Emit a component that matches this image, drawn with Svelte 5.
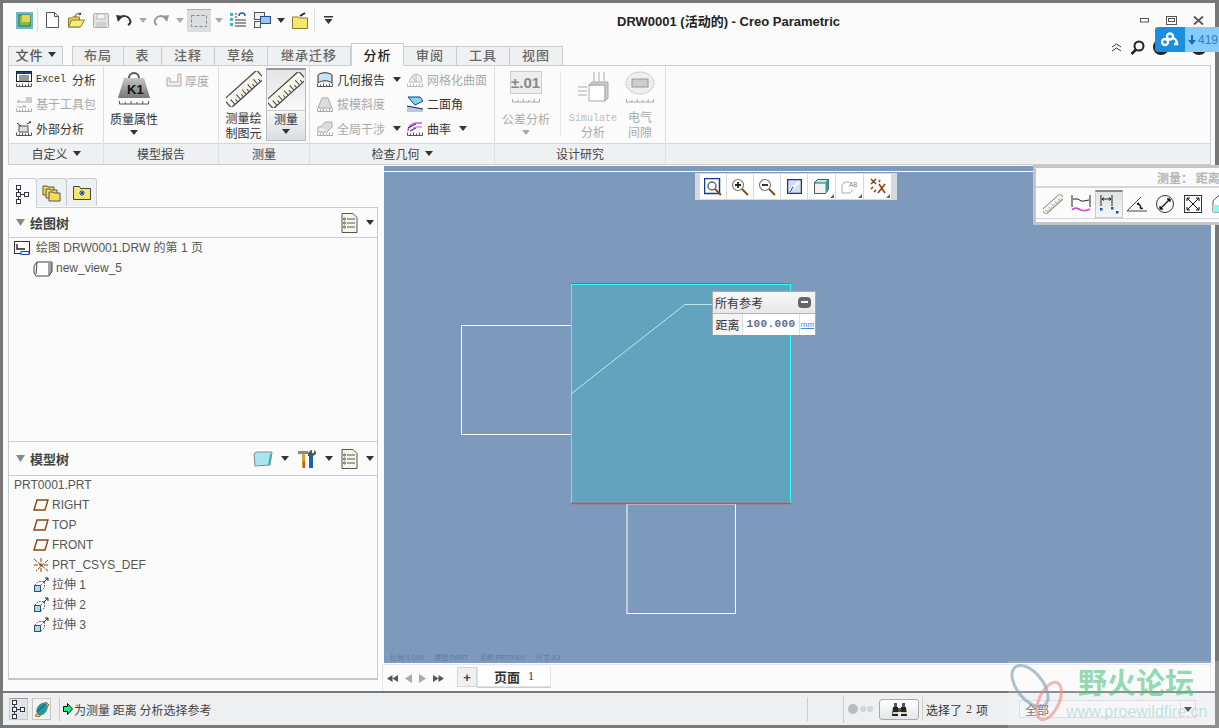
<script>
  const tabs = [['布局','t52'],['表','t38'],['注释','t53'],['草绘','t53'],['继承迁移','t83'],['分析','t53 on'],['审阅','t53'],['工具','t53'],['视图','t53']];
  const planes = ['RIGHT','TOP','FRONT'];
  const extrudes = ['拉伸 1','拉伸 2','拉伸 3'];
  const ticks = [0,1,2,3,4,5,6,7,8,9];
</script>

{#snippet caret(dim = false)}
  <svg class="caret" width="8" height="5" viewBox="0 0 8 5"><path d="M0 0h8L4 5z" fill={dim ? '#aaa' : '#333'}/></svg>
{/snippet}

{#snippet scale(x, y, w, color = '#555')}
  <path d="M{x} {y}h{w}M{x} {y}v-3M{x + w * .2} {y}v-2M{x + w * .4} {y}v-3M{x + w * .6} {y}v-2M{x + w * .8} {y}v-3M{x + w} {y}v-3" stroke={color} fill="none"/>
{/snippet}

{#snippet ruler(size)}
  <svg width={size} height={size} viewBox="0 0 36 36">
    <g transform="rotate(-42 18 18)">
      <rect x="-4" y="12.500" width="44" height="11" rx="1.500" fill="#f7f6ec" stroke="#444" stroke-width="1.200"/>
      {#each ticks as t}
        <path d="M{1 + t * 3.8} 23v{t % 2 ? -3 : -6}" stroke="#444"/>
      {/each}
    </g>
  </svg>
{/snippet}

{#snippet listIcon()}
  <svg width="17" height="20" viewBox="0 0 17 20"><path d="M1 .5h11l4 4v15H1z" fill="#f5f5ea" stroke="#555"/><path d="M6 6h8M6 10h8M6 14h8" stroke="#555"/><circle cx="3.500" cy="6" r="1" fill="none" stroke="#555"/><circle cx="3.500" cy="10" r="1" fill="none" stroke="#555"/><circle cx="3.500" cy="14" r="1" fill="none" stroke="#555"/></svg>
{/snippet}

{#snippet treeIcon()}
  <svg width="15" height="20" viewBox="0 0 15 20"><g fill="#fff" stroke="#334"><rect x="1.500" y="1.500" width="4" height="4"/><rect x="1.500" y="8.500" width="4" height="4"/><rect x="9.500" y="8.500" width="4" height="4"/><rect x="1.500" y="15.500" width="4" height="4"/></g><path d="M3.500 5.500v3M3.500 12.500v3M5.500 10.500h4" stroke="#334"/></svg>
{/snippet}

<div class="root">
  <div class="win">
    <header class="titlebar">
      <div class="qat">
        <svg class="m0" width="17" height="17" viewBox="0 0 17 17"><rect width="17" height="17" fill="#6fb7cf"/><rect x="3" y="3" width="11" height="11" fill="#7cc04e" stroke="#3b6e2a"/><rect x="6" y="3" width="8" height="7" fill="#e9d44e"/></svg>
        <i class="sep s1"></i>
        <svg class="m8" width="13" height="16" viewBox="0 0 13 16"><path d="M.5.5h8l4 4v11H.5z" fill="#fff" stroke="#555"/><path d="M8.500.5v4h4" fill="none" stroke="#555"/></svg>
        <svg class="m9" width="17" height="16" viewBox="0 0 17 16"><path d="M.5 15V6h3l1-1h7v10z" fill="#f2d54e" stroke="#8b7a20"/><path d="M.5 15l3-7h13l-4 7z" fill="#f9e88a" stroke="#8b7a20"/><path d="M7 5c0-3 3-4 6-3l-1-1.500M13 2l-2 1" fill="none" stroke="#333"/></svg>
        <svg class="m8" width="16" height="15" viewBox="0 0 16 15"><rect x=".5" y=".5" width="15" height="14" rx="1" fill="#e4e4e4" stroke="#aaa"/><rect x="4" y="1" width="8" height="5" fill="#f6f6f6" stroke="#bbb"/><rect x="3" y="9" width="10" height="5" fill="#cfcfcf"/></svg>
        <svg class="m7" width="16" height="12" viewBox="0 0 16 12"><path d="M3 5c3-4 9-4 11 1 1 2 0 4-2 5" fill="none" stroke="#333" stroke-width="2"/><path d="M0 1l7 1-5 6z" fill="#333"/></svg>
        <span class="m7 cw">{@render caret(true)}</span>
        <svg class="m6" width="16" height="12" viewBox="0 0 16 12"><path d="M13 5C10 1 4 1 2 6c-1 2 0 4 2 5" fill="none" stroke="#999" stroke-width="2"/><path d="M16 1l-7 1 5 6z" fill="#999"/></svg>
        <span class="m7 cw">{@render caret(true)}</span>
        <span class="pressed"><svg width="16" height="12" viewBox="0 0 16 12"><rect x=".5" y=".5" width="15" height="11" fill="none" stroke="#888" stroke-dasharray="3 2"/></svg></span>
        <span class="m4 cw">{@render caret(true)}</span>
        <svg class="m7" width="16" height="16" viewBox="0 0 16 16"><path d="M5 2h2M5 5h2M5 8h11M5 11h11M5 14h11" stroke="#334"/><g fill="#3fb6c8"><rect x="0" y="1" width="3" height="3"/><rect x="0" y="6" width="3" height="3"/><rect x="0" y="11" width="3" height="3"/></g><path d="M9 4a3 3 0 0 1 6 0" fill="none" stroke="#1a5fb4" stroke-width="1.500"/></svg>
        <svg class="m8" width="17" height="16" viewBox="0 0 17 16"><rect x=".5" y=".5" width="10" height="7" fill="#eee" stroke="#555"/><rect x="6.500" y="4.500" width="10" height="7" fill="#9cc3ea" stroke="#1a4fa0"/><rect x=".5" y="9.500" width="6" height="6" fill="#eee" stroke="#555"/></svg>
        <span class="m6 cw">{@render caret()}</span>
        <svg class="m7" width="16" height="17" viewBox="0 0 16 17"><path d="M.5 5h6l1 1h8v10.500h-15z" fill="#f5e96b" stroke="#8b7a20"/><path d="M8 4l5-3" stroke="#222" stroke-width="2"/></svg>
        <i class="sep s2"></i>
        <svg class="m9" width="9" height="8" viewBox="0 0 9 8"><path d="M0 0h9v1.500H0zM.5 3h8L4.500 8z" fill="#333"/></svg>
      </div>
      <h1 class="title">DRW0001 (活动的) - Creo Parametric</h1>
      <div class="winctl">
        <svg width="10" height="5" viewBox="0 0 10 5"><rect x=".5" y=".5" width="8" height="3.500" fill="none" stroke="#555"/></svg>
        <svg width="11" height="9" viewBox="0 0 11 9"><rect x=".5" y=".5" width="10" height="8" fill="none" stroke="#555"/><rect x="2.500" y="2.500" width="6" height="3" fill="none" stroke="#555"/></svg>
        <svg width="11" height="9" viewBox="0 0 11 9"><path d="M1 .5l9 8M10 .5l-9 8" stroke="#555" stroke-width="1.800"/></svg>
      </div>
    </header>

    <div class="tabrow">
      <div class="filetab">文件 {@render caret(false)}</div>
      <div class="tabs">
        {#each tabs as [t, c]}
          <div class="tab {c}">{t}</div>
        {/each}
      </div>
      <div class="helpers">
        <svg width="11" height="9" viewBox="0 0 11 9"><path d="M1 4l4.500-3L10 4M1 8l4.500-3L10 8" fill="none" stroke="#333"/></svg>
        <svg width="15" height="15" viewBox="0 0 15 15"><circle cx="9" cy="6" r="4.500" fill="none" stroke="#222" stroke-width="2"/><path d="M6 9.500L1.500 14" stroke="#222" stroke-width="2.500"/></svg>
        <svg width="16" height="16" viewBox="0 0 16 16"><circle cx="8" cy="8" r="8" fill="#222"/></svg>
        <svg class="disc2" width="16" height="16" viewBox="0 0 16 16"><circle cx="8" cy="8" r="8" fill="#222"/></svg>
      </div>
    </div>

    <section class="ribbon">
      <div class="group g1">
        <div class="gbody col3">
          <div class="item"><svg width="16" height="16" viewBox="0 0 16 16"><rect x=".5" y=".5" width="15" height="10" fill="#fff" stroke="#222"/><rect x="1" y="1" width="14" height="2" fill="#1a3f8c"/><path d="M3 5h10M3 7h10M3 9h10" stroke="#333"/>{@render scale(.5, 15.5, 15)}</svg><span class="excel">Excel</span><span class="m2">分析</span></div>
          <div class="item dim"><svg width="16" height="16" viewBox="0 0 16 16"><path d="M1 6h9M1 6l3-2M1 11h9M10 11l-3-2" stroke="#aaa" fill="none"/><rect x="10" y="1" width="6" height="6" fill="#ccc"/>{@render scale(.5, 15.5, 15, '#aaa')}</svg><span>基于工具包</span></div>
          <div class="item"><svg width="16" height="16" viewBox="0 0 16 16"><rect x="3" y="6" width="9" height="6" fill="#ddd" stroke="#555"/><path d="M1 3l4 3M11 4l4-2M15 2l-2 0" stroke="#222" fill="none"/>{@render scale(.5, 15.5, 15)}</svg><span>外部分析</span></div>
        </div>
        <div class="glabel">自定义 {@render caret()}</div>
      </div>

      <div class="group g2">
        <div class="gbody row">
          <div class="big w60">
            <svg width="32" height="34" viewBox="0 0 32 34"><defs><linearGradient id="kg" x1="0" y1="0" x2="0" y2="1"><stop offset="0" stop-color="#c4c4c4"/><stop offset="1" stop-color="#777"/></linearGradient></defs><path d="M11 7a5 5 0 0 1 10 0" fill="none" stroke="#555" stroke-width="2"/><path d="M6 7h20l6 20H0z" fill="url(#kg)"/><text x="9" y="23" class="k1">K1</text>{@render scale(1.500, 33, 29)}</svg>
            <div class="biglabel pad14">质量属性</div>
            {@render caret()}
          </div>
          <div class="item dim solo"><svg width="16" height="14" viewBox="0 0 16 14"><path d="M1 5h3v4h8V1h3v12H1z" fill="#eee" stroke="#aaa"/></svg><span>厚度</span></div>
        </div>
        <div class="glabel">模型报告</div>
      </div>

      <div class="group g3">
        <div class="gbody row">
          <div class="big w45">
            {@render ruler(36)}
            <div class="biglabel two"><div>测量绘</div><div>制图元</div></div>
          </div>
          <div class="active">
            <div class="atop">{@render ruler(36)}</div>
            <div class="abot"><span>测量</span>{@render caret()}</div>
          </div>
        </div>
        <div class="glabel">测量</div>
      </div>

      <div class="group g4">
        <div class="gbody row">
          <div class="col3 c83">
            <div class="item"><svg width="16" height="16" viewBox="0 0 16 16"><path d="M1 12V4c3-3 11-3 14 0v8c-4-3-10-3-14 0z" fill="#c9e0f7" stroke="#333"/>{@render scale(.5, 15.5, 15)}</svg><span>几何报告</span>{@render caret()}</div>
            <div class="item dim"><svg width="16" height="16" viewBox="0 0 16 16"><path d="M1 12l4-10h6l4 10z" fill="#ddd" stroke="#aaa"/>{@render scale(.5, 15.5, 15, '#aaa')}</svg><span>拔模斜度</span></div>
            <div class="item dim"><svg width="16" height="16" viewBox="0 0 16 16"><rect x="1" y="7" width="9" height="5" fill="#eee" stroke="#aaa"/><path d="M4 7l4-5h7v5l-5 5" fill="#ddd" stroke="#aaa"/>{@render scale(.5, 15.5, 15, '#aaa')}</svg><span>全局干涉</span>{@render caret()}</div>
          </div>
          <div class="col3 c85">
            <div class="item dim"><svg width="16" height="16" viewBox="0 0 16 16"><path d="M2 11l3-6 4-2 5 2 1 6zM5 5l4 6M9 3v8" fill="#eee" stroke="#bbb"/>{@render scale(.5, 15.5, 15, '#bbb')}</svg><span>网格化曲面</span></div>
            <div class="item"><svg width="16" height="16" viewBox="0 0 16 16"><path d="M1 1h12l3 4-8 4z" fill="#7fd7ea" stroke="#123a8c"/><path d="M0 10l16 3v3H0z" fill="#b8c9e0"/><path d="M0 10l16 3" stroke="#222"/></svg><span>二面角</span></div>
            <div class="item"><svg width="16" height="16" viewBox="0 0 16 16"><path d="M1 11c0-5 5-8 9-8h5" fill="none" stroke="#d14fd1" stroke-width="1.500"/><path d="M5 11c0-3 3-4 5-4h5" fill="none" stroke="#d14fd1"/><path d="M1 8l8-4M3 11l6-3" stroke="#123a8c"/>{@render scale(.5, 15.5, 15)}</svg><span>曲率</span>{@render caret()}</div>
          </div>
        </div>
        <div class="glabel">检查几何 {@render caret()}</div>
      </div>

      <div class="group g5">
        <div class="gbody row">
          <div class="big w60b dimtext">
            <svg width="32" height="34" viewBox="0 0 32 34"><rect x=".5" y=".5" width="31" height="22" fill="#eee" stroke="#ccc"/><text x="1" y="17" class="tol">±.01</text>{@render scale(2.500, 31, 27, '#aaa')}</svg>
            <div class="biglabel pad14">公差分析</div>
            {@render caret(true)}
          </div>
          <i class="vsep"></i>
          <div class="big w64 dimtext">
            <svg width="32" height="34" viewBox="0 0 32 34"><path d="M17 1v9M22 1v9M27 1v9M1 16h9M1 20h9M1 24h9" stroke="#aaa"/><rect x="12" y="14" width="16" height="16" fill="#fff" stroke="#aaa"/><path d="M12 14l3-3h16v16l-3 3V14z" fill="#ccc" stroke="#aaa"/></svg>
            <div class="biglabel two"><div class="mono">Simulate</div><div>分析</div></div>
          </div>
          <div class="big w30 dimtext">
            <svg width="32" height="34" viewBox="0 0 32 34"><ellipse cx="16" cy="12" rx="14" ry="11" fill="#eee" stroke="#bbb" stroke-dasharray="2 1"/><rect x="8" y="8" width="16" height="8" fill="#ccc" stroke="#999"/>{@render scale(2.500, 31, 27, '#aaa')}</svg>
            <div class="biglabel two"><div>电气</div><div>间隙</div></div>
          </div>
        </div>
        <div class="glabel">设计研究</div>
      </div>
      <div class="group g6">
        <div class="gbody"></div>
        <div class="glabel"></div>
      </div>
    </section>

    <main class="main">
      <aside class="left">
        <div class="navtabs">
          <div class="navtab act">{@render treeIcon()}</div>
          <div class="navtab"><svg width="19" height="19" viewBox="0 0 19 19"><g fill="#f2dc55" stroke="#555"><path d="M1 3h4l1 1h6v8H1z"/><path d="M4 6h4l1 1h6v8H4z"/><path d="M7 9h4l1 1h6v8H7z"/></g></svg></div>
          <div class="navtab"><svg width="18" height="15" viewBox="0 0 18 15"><path d="M.5 14.500V1.500h6l1 2h10v11z" fill="#f5e96b" stroke="#444"/><path d="M9 5v6M6 8h6M7 6l4 4M11 6l-4 4" stroke="#1a3fc0"/></svg></div>
        </div>
        <div class="panel">
          <div class="phead">
            <svg width="9" height="7" viewBox="0 0 9 7"><path d="M0 0h9L4.500 7z" fill="#888"/></svg>
            <b>绘图树</b>
            <span class="ptools">{@render listIcon()}{@render caret()}</span>
          </div>
          <div class="tree top">
            <div class="node"><svg width="16" height="14" viewBox="0 0 16 14"><rect x=".5" y=".5" width="15" height="12" fill="#fff" stroke="#333"/><path d="M3 3v5h8" fill="none" stroke="#222" stroke-width="1.400"/><rect x="7" y="10.500" width="8" height="3" fill="#fff" stroke="#1a3fc0"/></svg><span>绘图 DRW0001.DRW 的第 1 页</span></div>
            <div class="node in"><svg width="20" height="17" viewBox="0 0 20 17"><path d="M1 13V6l3-4h15v9l-3 5H3z" fill="#fff" stroke="#444"/><path d="M4 2l-1 12M16 3v12M18 3v10" stroke="#444" fill="none"/></svg><span>new_view_5</span></div>
          </div>
          <div class="phead second">
            <svg width="9" height="7" viewBox="0 0 9 7"><path d="M0 0h9L4.500 7z" fill="#888"/></svg>
            <b>模型树</b>
            <span class="ptools">
              <svg width="20" height="16" viewBox="0 0 20 16"><path d="M3 1h16l-2 13-15 1-1-12z" fill="#a8e6ef" stroke="#888"/><path d="M17 3h2l-2 11h-2z" fill="#3fb0b8"/></svg>
              {@render caret()}
              <svg width="20" height="20" viewBox="0 0 20 20"><path d="M1 2h10v3H1z" fill="#888"/><path d="M5 5h3v14H5z" fill="#e8a020"/><path d="M6 12h2v7H6z" fill="#d94f1f"/><path d="M12 7h4v12h-4z" fill="#1a5fb4"/><path d="M11 7V4l3-3h1v3h2V1l2 2v2l-3 2z" fill="#555"/></svg>
              {@render caret()}
              {@render listIcon()}
              {@render caret()}
            </span>
          </div>
          <div class="tree bottom">
            <div class="node root0"><span>PRT0001.PRT</span></div>
            {#each planes as p}
              <div class="node in"><svg width="16" height="12" viewBox="0 0 16 12"><path d="M4 1h11l-3 10H1z" fill="none" stroke="#8b4513" stroke-width="1.400"/></svg><span>{p}</span></div>
            {/each}
            <div class="node in"><svg width="16" height="16" viewBox="0 0 16 16"><path d="M1 2l14 12M15 3L3 14M8 1v14M1 8h14" stroke="#8b4513" fill="none" stroke-dasharray="4 1"/></svg><span>PRT_CSYS_DEF</span></div>
            {#each extrudes as e}
              <div class="node in"><svg width="16" height="16" viewBox="0 0 16 16"><rect x="1.500" y="8.500" width="6" height="6" fill="#8fe8ea" stroke="#446"/><path d="M1.500 8.500l4-4h6v6l-4 4M7.500 8.500l4-4" fill="none" stroke="#666" stroke-dasharray="2 1"/><path d="M11 5l4-4M12 1h3v3" fill="none" stroke="#222"/></svg><span>{e}</span></div>
            {/each}
          </div>
        </div>
      </aside>

      <div class="viewcol">
        <div class="canvas">
          <i class="wline"></i>
          <div class="viewbar">
            <span class="vb"><svg width="18" height="18" viewBox="0 0 18 18"><rect x=".5" y=".5" width="15" height="15" fill="#fff" stroke="#123a8c" stroke-width="1.500"/><circle cx="8" cy="8" r="4" fill="none" stroke="#666" stroke-width="1.500"/><path d="M11 11l6 6" stroke="#8b4513" stroke-width="1.800"/></svg></span>
            <span class="vb"><svg width="18" height="18" viewBox="0 0 18 18"><circle cx="7" cy="7" r="5.500" fill="#fff" stroke="#777" stroke-width="1.200"/><path d="M4 7h6M7 4v6" stroke="#222" stroke-width="1.800"/><path d="M11 11l6 6" stroke="#8b4513" stroke-width="1.800"/></svg></span>
            <span class="vb"><svg width="18" height="18" viewBox="0 0 18 18"><circle cx="7" cy="7" r="5.500" fill="#fff" stroke="#777" stroke-width="1.200"/><path d="M4 7h6" stroke="#222" stroke-width="1.800"/><path d="M11 11l6 6" stroke="#8b4513" stroke-width="1.800"/></svg></span>
            <span class="vb"><svg width="15" height="15" viewBox="0 0 15 15"><rect x=".5" y=".5" width="14" height="14" fill="#cfe0f2" stroke="#123a8c" stroke-width="1.500"/><path d="M3 12L12 3" stroke="#fff" stroke-width="3" stroke-dasharray="2 1"/><path d="M3 13l3-5" stroke="#123a8c"/></svg></span>
            <span class="vb wide"><svg width="15" height="15" viewBox="0 0 15 15"><path d="M.5 4l3-3.500h11v10l-3 4h-11z" fill="#f2f2f2" stroke="#555"/><path d="M.5 4h11l3-3.500h-11z" fill="#a8f0ef" stroke="#555"/><path d="M11.500 4v10.500l3-4V.5z" fill="#2f9c9c"/></svg></span>
            <span class="vb wide"><svg width="17" height="14" viewBox="0 0 17 14"><path d="M1 5l3-3h5M1 5v8h8l3-3" fill="none" stroke="#aaa"/><text x="8" y="7" class="ab">AB</text></svg></span>
            <span class="vb wide"><svg width="16" height="17" viewBox="0 0 16 17"><path d="M1 1l5 5M6 1L1 6M9 6l6 9M15 6L8 15M10 2l-1 2M1 11l2-2M4 14l2-2" stroke="#8b4513" stroke-width="1.600"/></svg></span>
          </div>

          <svg class="drawing" width="827" height="497" viewBox="384 166 827 497">
            <rect x="461.500" y="325.500" width="110" height="109" fill="none" stroke="#fff"/>
            <rect x="627" y="504" width="108.500" height="109.500" fill="none" stroke="#fff"/>
            <rect x="571" y="284" width="219" height="220" fill="#64a3bd"/>
            <path d="M571 284.500h219.500M571.500 284v220M790.500 284v220" stroke="#30ffff" fill="none"/>
            <path d="M571 283.500h220" stroke="#f0404a"/>
            <path d="M571 503.500h220" stroke="#f0404a" stroke-width="1.500"/>
            <path d="M571 394L685 304.500h28" fill="none" stroke="#bfe9ee"/>
          </svg>

          <div class="measure">
            <div class="mhead"><span>所有参考</span><i class="minus"></i></div>
            <div class="mrow"><span class="ml">距离</span><span class="mv">100.000</span><span class="mu">mm</span></div>
          </div>

          <div class="sheetinfo"><span>比例:1.000</span><span>类型:PART</span><span>名称:PRT0001</span><span>尺寸:A3</span></div>
        </div>
        <div class="pagebar">
          <div class="pnav">
            <svg width="11" height="7" viewBox="0 0 11 7"><path d="M5.500 0v7L0 3.500zM11 0v7L5.500 3.500z" fill="#555"/></svg>
            <svg width="7" height="9" viewBox="0 0 7 9"><path d="M7 0v9L0 4.500z" fill="#aaa"/></svg>
            <svg width="7" height="9" viewBox="0 0 7 9"><path d="M0 0v9l7-4.500z" fill="#aaa"/></svg>
            <svg width="11" height="7" viewBox="0 0 11 7"><path d="M0 0v7l5.500-3.500zM5.500 0v7L11 3.500z" fill="#555"/></svg>
          </div>
          <div class="plus">+</div>
          <div class="ptab"><b>页面</b><span>1</span></div>
        </div>
      </div>
    </main>

    <footer class="status">
      <span class="sbtn sel">{@render treeIcon()}</span>
      <span class="sbtn"><svg width="16" height="17" viewBox="0 0 16 17"><path d="M1 15L12 1l3 3L5 16z" fill="#f2d020" stroke="#c96a12"/><ellipse cx="8" cy="8" rx="5" ry="7" transform="rotate(35 8 8)" fill="#2b9a8a"/><path d="M3 11l8-8" stroke="#1a5fb4" stroke-width="1.500"/></svg></span>
      <i class="ssep first"></i>
      <svg width="10" height="12" viewBox="0 0 10 12"><path d="M.5 3.500h4V.5L9.500 6l-5 5.500v-3h-4z" fill="#1df08a" stroke="#111"/></svg>
      <span class="msg">为测量 距离 分析选择参考</span>
      <span class="spacer"></span>
      <i class="ssep"></i>
      <i class="ssep two"></i>
      <span class="dots"><i class="d1"></i><i class="d2"></i><i class="d2"></i></span>
      <span class="bino"><svg width="17" height="15" viewBox="0 0 17 15"><path d="M1 14l1-9h5v9zM10 14V5h5l1 9z" fill="#222"/><path d="M3 5V1h3v4M11 5V1h3v4M7 6h3v4H7z" fill="#555"/><path d="M2 11h5M10 11h6" stroke="#d8d4b8" stroke-width="2"/></svg></span>
      <i class="ssep three"></i>
      <span class="picked">选择了 <em>2</em> 项</span>
      <div class="filter"><span>全部</span><i class="fbtn">{@render caret()}</i></div>
    </footer>
  </div>

  <div class="floatwin">
    <div class="ftitle"><span>测量： 距离</span></div>
    <div class="fbar">
      <span class="fi">{@render ruler(20)}</span>
      <span class="fi"><svg width="20" height="20" viewBox="0 0 20 20"><path d="M1 1v12M19 1v12M2 5l5 0 3 2 3 0 5-1" fill="none" stroke="#222"/><path d="M1 16c3-4 6-1 9 0s6 1 9-1" fill="none" stroke="#d14fd1" stroke-width="1.800"/></svg></span>
      <span class="fi on"><svg width="20" height="20" viewBox="0 0 20 20"><path d="M2 1v11M13 1v11M3 5h9M3 5l2-1.500M3 5l2 1.500M12 5l-2-1.500M12 5l-2 1.500" fill="none" stroke="#222"/><rect x="1" y="14" width="2.500" height="2.500" fill="#1a4fc0"/><rect x="12" y="13" width="2.500" height="2.500" fill="#1a4fc0"/><rect x="17" y="17" width="2.500" height="2.500" fill="#1a4fc0"/></svg></span>
      <span class="fi"><svg width="20" height="20" viewBox="0 0 20 20"><path d="M0 17h20M0 17L14 3" fill="none" stroke="#444"/><path d="M10 10c3 0 4 2 4 5M10 10l2-1M14 15l-1-2M14 15l2-1" fill="none" stroke="#111" stroke-width="1.300"/></svg></span>
      <span class="fi"><svg width="20" height="20" viewBox="0 0 20 20"><circle cx="10" cy="10" r="8.500" fill="none" stroke="#333"/><path d="M5 15L15 5M5 15v-3M5 15h3M15 5v3M15 5h-3" fill="none" stroke="#111" stroke-width="1.300"/></svg></span>
      <span class="fi"><svg width="18" height="18" viewBox="0 0 18 18"><rect x=".5" y=".5" width="17" height="17" fill="none" stroke="#333"/><path d="M3 3l12 12M15 3L3 15M3 3h3M3 3v3M15 3h-3M15 3v3M3 15h3M3 15v-3M15 15h-3M15 15v-3" fill="none" stroke="#111"/></svg></span>
      <span class="fi"><svg width="18" height="18" viewBox="0 0 18 18"><path d="M1 6l5-5h12v16H1z" fill="#fff" stroke="#555"/><rect x="1" y="10" width="17" height="7" fill="#8ff5f0"/></svg></span>
    </div>
  </div>

  <div class="badge">
    <span class="bl"><svg width="18" height="15" viewBox="0 0 18 15"><circle cx="9" cy="4.500" r="3" fill="none" stroke="#fff" stroke-width="2.400"/><circle cx="4" cy="10" r="3" fill="none" stroke="#fff" stroke-width="2.400"/><path d="M11 6c3 0 5 3 5 6h-3" fill="none" stroke="#fff" stroke-width="2.400"/></svg></span>
    <span class="br"><svg width="8" height="10" viewBox="0 0 8 10"><path d="M3 0h2v5h3l-4 5-4-5h3z" fill="#0c70c4"/></svg>419</span>
  </div>

  <div class="watermark">
    <svg width="60" height="66" viewBox="0 0 60 66"><ellipse cx="22" cy="25" rx="13" ry="24" transform="rotate(-38 22 25)" fill="none" stroke="#7d9ab4" stroke-opacity=".6" stroke-width="3"/><ellipse cx="41" cy="40" rx="10" ry="20" transform="rotate(25 41 40)" fill="none" stroke="#e88" stroke-opacity=".6" stroke-width="3"/></svg>
    <div class="wtext"><div class="wcn">野火论坛</div><div class="wen">www.proewildfire.cn</div></div>
  </div>
</div>

<style>
  :global(body) { margin: 0; background: #777; }
  .root { position: relative; width: 1219px; height: 728px; overflow: hidden; font-family: "Noto Sans CJK SC", "Liberation Sans", sans-serif; font-size: 12px; color: #444; }
  .win { box-sizing: border-box; width: 1219px; height: 728px; border: 3px solid #777; border-right-width: 4px; background: #fbfbfb; display: flex; flex-direction: column; }
  svg { display: block; flex: none; }
  i, em { font-style: normal; display: block; }

  .titlebar { height: 38px; flex: none; display: flex; align-items: center; position: relative; box-sizing: border-box; padding-bottom: 4px; }
  .qat { display: flex; align-items: center; padding-left: 13px; height: 34px; }
  .sep { width: 1px; height: 24px; background: #ddd; }
  .s1 { margin-left: 4px; } .s2 { margin-left: 6px; }
  .m0 { margin: 0; }
  .m2 { margin-left: 2px; }
  .m4 { margin-left: 4px; } .m6 { margin-left: 6px; } .m7 { margin-left: 7px; } .m8 { margin-left: 8px; } .m9 { margin-left: 9px; }
  .cw { display: block; }
  .pressed { margin-left: 3px; width: 24px; height: 23px; display: flex; align-items: center; justify-content: center; background: #dcdddf; border-top: 1px solid #aaa; box-sizing: border-box; }
  .title { margin: 0 0 0 284px; font: 700 13px "Liberation Sans", "Noto Sans CJK SC", sans-serif; color: #222; white-space: nowrap; }
  .winctl { margin-left: auto; padding-right: 11px; display: flex; align-items: center; gap: 16px; }

  .tabrow { height: 24px; flex: none; display: flex; align-items: flex-end; padding-left: 5px; position: relative; z-index: 1; }
  .filetab { width: 55px; height: 19px; box-sizing: border-box; background: #eff0f2; border: 1px solid #c9ccd0; border-bottom: none; padding-bottom: 3px; display: flex; align-items: center; justify-content: center; gap: 4px; font-size: 13px; letter-spacing: 1px; font-weight: 500; color: #555; }
  .tabs { display: flex; margin-left: 9px; align-items: flex-end; }
  .tab { box-sizing: border-box; height: 19px; padding-bottom: 3px; background: #eff0f2; border: 1px solid #c9ccd0; border-left: none; border-bottom: none; display: flex; align-items: center; justify-content: center; font-size: 13px; letter-spacing: 1px; font-weight: 500; color: #666; }
  .tab:first-child { border-left: 1px solid #c9ccd0; }
  .t38 { width: 38px; } .t52 { width: 52px; } .t53 { width: 53px; } .t83 { width: 83px; }
  .tab.on { height: 23px; padding-bottom: 0; background: #fbfbfb; color: #222; border: 1px solid #c9ccd0; border-bottom: 1px solid #fbfbfb; margin-bottom: -1px; }
  .helpers { margin-left: auto; display: flex; align-items: center; padding: 0 8px 12px 0; height: 24px; box-sizing: border-box; gap: 8px; }
  .helpers .disc2 { margin-left: 14px; }

  .ribbon { height: 100px; flex: none; margin: 0 4px 0 5px; display: flex; box-sizing: border-box; border: 1px solid #c9ccd0; }
  .group { display: flex; flex-direction: column; border-right: 1px solid #dcdee0; box-sizing: border-box; }
  .g1 { width: 95px; } .g2 { width: 115px; } .g3 { width: 91px; } .g4 { width: 185px; } .g5 { width: 171px; } .g6 { flex: 1; border-right: none; }
  .gbody { height: 77px; flex: none; box-sizing: border-box; }
  .glabel { flex: 1; background: #eff0f2; border-top: 1px solid #d3d5d8; padding-bottom: 2px; display: flex; align-items: center; justify-content: center; gap: 5px; color: #444; }
  .col3 { display: flex; flex-direction: column; padding-top: 1px; }
  .gbody.col3 { padding-left: 7px; }
  .row { display: flex; }
  .item { height: 24.500px; display: flex; align-items: center; gap: 4px; white-space: nowrap; color: #333; font-size: 12px; }
  .item.dim { color: #aaa; }
  .excel { font: 10px "Liberation Mono", monospace; color: #333; }
  .big { display: flex; flex-direction: column; align-items: center; padding-top: 5px; box-sizing: border-box; flex: none; }
  .biglabel { text-align: center; color: #333; line-height: 14px; margin-bottom: 4px; white-space: nowrap; }
  .pad14 { padding-top: 7px; }
  .two { line-height: 15px; padding-top: 3px; }
  .g5 .two { padding-top: 4px; }
  .dimtext .biglabel { color: #aaa; }
  .w60 { width: 60px; } .w45 { width: 45px; margin-left: 2px; } .w60b { width: 60px; } .w64 { width: 64px; } .w30 { width: 30px; }
  .k1 { font: 700 13px "Liberation Sans", sans-serif; fill: #111; }
  .tol { font: 700 15px "Liberation Sans", sans-serif; fill: #888; }
  .ab { font: 7px "Liberation Mono", monospace; fill: #888; }
  .mono { font: 10px/15px "Liberation Mono", monospace; color: #bbb; height: 15px; padding-top: 2px; box-sizing: border-box; }
  .solo { margin: 2px 0 0 2px; gap: 3px; }
  .active { width: 40px; margin: 2px 0 0 0; height: 73px; box-sizing: border-box; border: 1px solid #b9bbbe; border-top: 2px solid #999; display: flex; flex-direction: column; background: #e6e7e9; }
  .atop { height: 40px; display: flex; justify-content: center; align-items: center; background: linear-gradient(#e4e5e7, #f8f8f8); border-bottom: 1px solid #c9ccd0; flex: none; }
  .abot { flex: 1; display: flex; flex-direction: column; align-items: center; gap: 3px; padding-top: 1px; color: #333; background: linear-gradient(#f6f6f6, #dcdde0); line-height: 14px; }
  .c83 { width: 89px; padding-left: 7px; box-sizing: border-box; }
  .c85 { width: 90px; padding-left: 8px; box-sizing: border-box; }
  .g4 .col3 .item :global(.caret) { margin-left: 4px; }
  .vsep { width: 1px; background: #e6e7e9; margin: 6px 0 7px 4px; }
  .g5 .row { padding-left: 1px; }

  .main { flex: 1; min-height: 0; display: flex; padding-left: 5px; padding-right: 4px; }
  .left { width: 370px; flex: none; padding-top: 13px; margin-right: 6px; display: flex; flex-direction: column; height: 515px; box-sizing: border-box; }
  .navtabs { display: flex; height: 29px; flex: none; position: relative; z-index: 1; }
  .navtab { width: 30px; height: 28px; box-sizing: border-box; background: #eff0f2; border: 1px solid #c9ccd0; border-left: none; border-bottom: none; border-radius: 3px 3px 0 0; display: flex; align-items: center; justify-content: center; }
  .navtab.act { background: #fbfbfb; height: 30px; border-left: 1px solid #c9ccd0; width: 29px; }
  .panel { flex: 1; border: 1px solid #c9ccd0; border-bottom: 2px solid #c4c6c8; box-sizing: border-box; display: flex; flex-direction: column; min-height: 0; }
  .phead { height: 29px; flex: none; display: flex; align-items: center; padding-left: 7px; gap: 5px; border-bottom: 1px solid #c9ccd0; }
  .phead b { font-size: 13px; font-weight: 700; color: #444; }
  .ptools { margin-left: auto; display: flex; align-items: center; padding-right: 3px; gap: 8px; }
  .phead.second { height: 33px; border-top: 1px solid #c9ccd0; }
  .tree { font: 12px/14px "Liberation Sans", "Noto Sans CJK SC", sans-serif; color: #555; }
  .tree.top { height: 203px; flex: none; box-sizing: border-box; }
  .tree.bottom { flex: 1; margin-top: -1px; }
  .node { height: 20px; display: flex; align-items: center; gap: 4px; padding-left: 5px; }
  .node span { display: block; height: 14px; overflow: visible; }
  .node.in { padding-left: 24px; }
  .tree.top .node { gap: 6px; }
  .tree.top .node.in { padding-left: 24px; gap: 3px; }
  .tree.bottom .node.in { gap: 3px; }
  .root0 { height: 20px; }

  .viewcol { flex: 1; display: flex; flex-direction: column; min-width: 0; }
  .canvas { position: relative; height: 497px; flex: none; margin-top: 1px; background: #7d9abd; }
  .wline { position: absolute; left: 0; right: 0; top: 5px; height: 1px; background: #fff; }
  .drawing { position: absolute; left: 0; top: 0; }
  .viewbar { position: absolute; left: 311px; top: 7px; height: 27px; display: flex; box-sizing: border-box; padding: 1px 6px 1px 5px; background: #d5d8dc; gap: 1px; z-index: 2; }
  .vb { width: 26px; background: #fff; display: flex; align-items: center; justify-content: center; position: relative; }
  .vb.wide { width: 27px; }
  .vb.wide::after { content: ""; position: absolute; right: 1px; bottom: 1px; border-left: 4px solid transparent; border-bottom: 4px solid #666; }

  .measure { position: absolute; left: 328px; top: 125px; width: 104px; height: 44px; box-sizing: border-box; background: #eee; border: 1px solid #aaa; z-index: 2; }
  .mhead { height: 21px; display: flex; align-items: center; padding: 0 4px 0 2px; justify-content: space-between; background: linear-gradient(#f7f7f7, #e6e7e9); border-bottom: 1px solid #b5b5b5; color: #333; line-height: 14px; }
  .minus { width: 13px; height: 11px; background: #666; border-radius: 4px; position: relative; }
  .minus::after { content: ""; position: absolute; left: 3px; right: 3px; top: 4px; height: 2px; background: #fff; }
  .mrow { height: 21px; display: flex; align-items: center; background: #fff; }
  .ml { width: 29px; text-align: center; background: #f4f4f4; height: 100%; line-height: 21px; border-right: 1px solid #ddd; color: #333; }
  .mv { width: 56px; text-align: center; font: 700 11px "Liberation Mono", monospace; letter-spacing: .4px; color: #5c6f8a; border-right: 1px solid #ddd; height: 100%; line-height: 21px; }
  .mu { flex: 1; font: 8px "Liberation Sans", sans-serif; color: #3b8fd0; text-align: center; text-decoration: underline; }
  .sheetinfo { position: absolute; left: 6px; bottom: 1px; display: flex; gap: 11px; font: 7px "Liberation Sans", "Noto Sans CJK SC", sans-serif; color: #5d7aa0; }

  .pagebar { height: 28px; flex: none; margin-top: 1px; margin-left: -2px; background: #fbfbfb; border: 1px solid #e4e5e7; border-bottom: none; box-sizing: border-box; display: flex; align-items: center; }
  .pnav { display: flex; align-items: center; gap: 7px; padding-left: 4px; width: 74px; box-sizing: border-box; flex: none; }
  .plus { width: 20px; height: 20px; box-sizing: border-box; background: #eff0f2; border: 1px solid #d3d5d8; display: flex; align-items: center; justify-content: center; font: 700 13px "Liberation Sans", sans-serif; color: #444; margin-top: -3px; }
  .ptab { width: 74px; height: 20px; box-sizing: border-box; border: 1px solid #e1e2e4; border-top: none; box-shadow: 0 1px 0 #ccc; display: flex; align-items: center; justify-content: center; gap: 8px; margin-top: -3px; background: #fff; }
  .ptab b { font-size: 13px; color: #333; }
  .ptab span { font: 12px "Liberation Serif", serif; color: #333; }

  .status { height: 34px; flex: none; background: #eeeff1; border-top: 2px solid #777; box-sizing: border-box; display: flex; align-items: center; padding-left: 6px; padding-right: 19px; }
  .sbtn { width: 19px; height: 22px; box-sizing: border-box; border: 1px solid #c4c6c8; display: flex; align-items: center; justify-content: center; background: #f2f2f2; margin-right: 4px; }
  .sbtn.sel { background: #e2e3e5; border-top-color: #999; }
  .ssep { width: 1px; height: 24px; background: #ccc; margin: 0 3px; flex: none; }
  .ssep.first { margin: 0 3px 0 4px; }
  .msg { font-size: 12px; color: #444; margin-left: 1px; white-space: nowrap; }
  .spacer { flex: 1; }
  .ssep.two { margin-left: 32px; margin-right: 4px; }
  .dots { display: flex; align-items: center; gap: 1px; width: 31px; flex: none; }
  .d1 { width: 10px; height: 10px; background: #bbb; border-radius: 50%; margin-right: 1px; }
  .d2 { width: 6px; height: 6px; background: #d5d5d5; border-radius: 50%; }
  .bino { width: 40px; height: 21px; flex: none; box-sizing: border-box; border: 1px solid #aaa; border-radius: 3px; background: linear-gradient(#fff, #e4e5e7); display: flex; align-items: center; justify-content: center; }
  .picked { width: 93px; flex: none; white-space: nowrap; color: #333; font-size: 12px; display: flex; gap: 4px; }
  .picked em { font: 12px "Liberation Serif", serif; color: #444; line-height: 17px; }
  .filter { width: 177px; height: 18px; flex: none; box-sizing: border-box; border: 1px solid #d5d6d8; background: #f4f4f5; display: flex; align-items: center; padding-left: 5px; color: #555; }
  .fbtn { margin-left: auto; width: 14px; height: 100%; border-left: 1px solid #d5d6d8; display: flex; align-items: center; justify-content: center; }

  .floatwin { position: absolute; left: 1033px; top: 165px; width: 186px; height: 60px; box-sizing: border-box; background: #fbfbfb; border: 3px solid #c4c6c8; border-right: none; z-index: 3; }
  .ftitle { height: 20px; box-sizing: border-box; border-bottom: 2px solid #d5d6d8; padding-left: 121px; font-size: 12px; font-weight: 700; color: #b5b5b5; white-space: nowrap; overflow: hidden; line-height: 19px; }
  .fbar { display: flex; height: 29px; align-items: center; padding-left: 3px; border-bottom: 1px solid #d5d6d8; margin-top: 1px; }
  .fi { width: 28px; height: 28px; flex: none; display: flex; align-items: center; justify-content: center; box-sizing: border-box; }
  .fi.on { background: linear-gradient(#e0e1e3, #f6f6f6); border: 1px solid #ccc; border-top: 2px solid #888; }

  .badge { position: absolute; left: 1155px; top: 27px; width: 64px; height: 25px; display: flex; z-index: 4; border-radius: 3px 0 0 3px; overflow: hidden; }
  .bl { width: 30px; background: #1a8fe0; display: flex; align-items: center; justify-content: center; }
  .br { flex: 1; background: #86ccfb; display: flex; align-items: center; gap: 2px; padding-left: 3px; font: 12px "Liberation Sans", sans-serif; color: #2f7fc0; white-space: nowrap; }

  .watermark { position: absolute; left: 1008px; top: 661px; width: 211px; height: 67px; background: rgba(255,255,255,.18); display: flex; z-index: 5; pointer-events: none; }
  .wtext { padding-left: 10px; }
  .wcn { font: 700 29px/32px "Noto Sans CJK SC", sans-serif; color: rgba(80,195,130,.6); white-space: nowrap; margin-top: 4px; }
  .wen { font: 16px/24px "Liberation Sans", sans-serif; color: rgba(110,190,190,.4); margin-left: -12px; white-space: nowrap; margin-top: 3px; }
</style>
